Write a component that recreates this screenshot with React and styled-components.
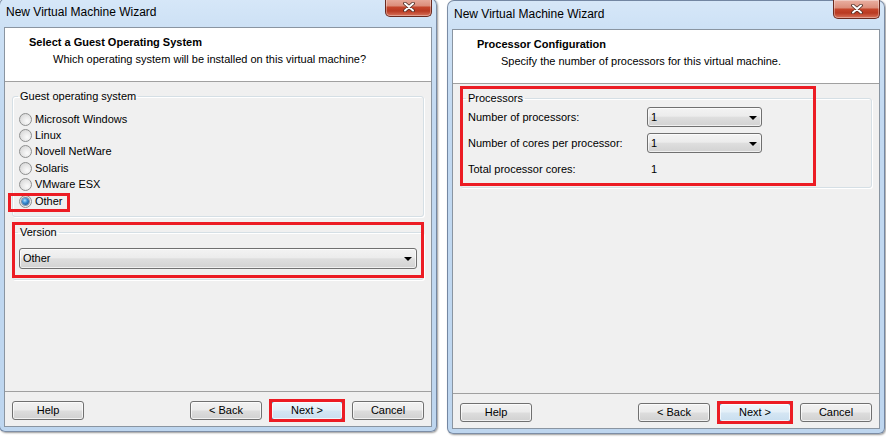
import React from 'react';
import styled, { createGlobalStyle } from 'styled-components';

const Global = createGlobalStyle`
  html, body { margin: 0; padding: 0; background: #fff; }
  body {
    width: 886px; height: 438px; overflow: hidden;
    font-family: "Liberation Sans", Arial, sans-serif; font-size: 11px; color: #000;
  }
  * { box-sizing: border-box; }
`;

const Stage = styled.div`
  display: flex;
  align-items: flex-start;
  gap: 10px;
  width: 886px;
  height: 438px;
  overflow: hidden;
`;

const Frame = styled.div`
  flex: none;
  width: 438px;
  height: 434px;
  margin-left: ${p => p.$dx || 0}px;
  margin-top: ${p => p.$dy || 0}px;
  display: flex;
  flex-direction: column;
  padding: 0 4px 4px 4px;
  border: 1px solid rgba(52, 70, 98, 0.55);
  border-radius: 7px 7px 6px 6px;
  background: linear-gradient(180deg, #d6e7f8 0px, #cde1f5 28px, #c2d9f1 120px, #bed6ef 100%);
  box-shadow: 1px 1px 2px rgba(0, 0, 0, 0.4);
`;

const TitleBar = styled.div`
  height: 28px;
  display: flex;
  align-items: flex-start;
  justify-content: space-between;
  padding-left: 2px;
`;

const TitleText = styled.div`
  margin-top: 6px;
  font-size: 12px;
  line-height: 15px;
  color: #000;
`;

const CloseBtn = styled.div`
  width: 47px;
  height: 19px;
  margin-top: -1px;
  border: 1px solid #6b2a1f;
  border-top: none;
  border-radius: 0 0 5px 5px;
  background: linear-gradient(180deg, #eab0a2 0%, #dc8f7c 42%, #c4452b 52%, #b93a22 72%, #d8735b 100%);
  box-shadow: inset 0 0 0 1px rgba(255, 255, 255, 0.35);
  display: flex;
  align-items: center;
  justify-content: center;
`;

const Client = styled.div`
  flex: 1;
  display: flex;
  flex-direction: column;
  border: 1px solid #8a95a1;
  background: #f0f0f0;
`;

const Header = styled.div`
  background: #fff;
  border-bottom: 1px solid #a0a0a0;
  padding: 7px 0 15px 24px;
  display: flex;
  flex-direction: column;
  gap: 3px;
`;

const HeadTitle = styled.div`
  font-weight: bold;
  line-height: 14px;
`;

const HeadSub = styled.div`
  line-height: 14px;
  padding-left: 24px;
`;

const Body = styled.div`
  flex: 1;
  padding: 8px 7px 0 7px;
  display: flex;
  flex-direction: column;
  gap: ${p => p.$gap || 0}px;
`;

const Annotated = styled.div`
  position: relative;
`;

const RedBox = styled.div`
  position: absolute;
  top: ${p => p.$t}px;
  left: ${p => p.$l}px;
  ${p => (p.$w != null ? `width: ${p.$w}px;` : `right: ${p.$r}px;`)}
  ${p => (p.$h != null ? `height: ${p.$h}px;` : `bottom: ${p.$b}px;`)}
  border: 3px solid #ec1c24;
  pointer-events: none;
  z-index: 2;
`;

const Group = styled.fieldset`
  margin: 0;
  min-width: 0;
  padding: 0 6px ${p => p.$pb}px 6px;
  border: 1px solid #d5dfe5;
  border-radius: 3px;
  box-shadow: inset 1px 1px 0 #fff, 1px 1px 0 #fff;
`;

const Legend = styled.legend`
  margin-left: -1px;
  padding: 0 2px;
  line-height: 13px;
  font-size: 11px;
`;

const RadioList = styled.div`
  padding-top: 8px;
  display: flex;
  flex-direction: column;
`;

const RadioRow = styled.div`
  position: relative;
  height: 16.4px;
  display: flex;
  align-items: center;
  gap: 3px;
  line-height: 13px;
`;

const RadioDot = styled.span`
  flex: none;
  width: 13px;
  height: 13px;
  border-radius: 50%;
  border: 1px solid #8e8f8f;
  background: radial-gradient(circle at 65% 65%, #fbfbfb 0, #e8e8e8 45%, #cfcfcf 100%);
  display: flex;
  align-items: center;
  justify-content: center;
  &::after {
    content: '';
    display: ${p => (p.$on ? 'block' : 'none')};
    width: 7px;
    height: 7px;
    border-radius: 50%;
    background: radial-gradient(circle at 40% 35%, #b4e3ff 0, #3a8fd6 40%, #0b3d72 100%);
    box-shadow: 0 0 0 1px rgba(20, 60, 110, 0.5);
  }
`;

const ComboWrap = styled.div`
  padding-top: ${p => p.$pt || 0}px;
`;

const Combo = styled.div`
  height: ${p => p.$h || 20}px;
  width: ${p => (p.$w ? `${p.$w}px` : 'auto')};
  border: 1px solid #707070;
  border-radius: 3px;
  background: linear-gradient(180deg, #f3f3f3 0%, #ececec 45%, #dedede 52%, #d2d2d2 100%);
  box-shadow: inset 0 0 0 1px rgba(255, 255, 255, 0.65);
  display: flex;
  align-items: center;
  justify-content: space-between;
  padding: 0 4px 0 3px;
  line-height: 13px;
`;

const Arrow = styled.span`
  width: 0;
  height: 0;
  border-left: 4px solid transparent;
  border-right: 4px solid transparent;
  border-top: 4px solid #000;
  margin-top: 1px;
`;

const ProcGrid = styled.div`
  display: grid;
  grid-template-columns: 179px 115px;
  grid-auto-rows: 26px;
  align-items: center;
  margin-top: -1px;
  padding-left: 1px;
  line-height: 13px;
`;

const Value = styled.div`
  padding-left: 4px;
`;

const Footer = styled.div`
  border-top: 1px solid #a0a0a0;
  padding: 9px 7px 6px 7px;
  display: flex;
  align-items: center;
`;

const Spacer = styled.div`
  flex: 1;
`;

const BtnGroup = styled.div`
  display: flex;
  gap: 9px;
`;

const Btn = styled.button`
  position: relative;
  width: 72px;
  height: 19px;
  padding: 0;
  border: 1px solid ${p => (p.$def ? '#3c7fb1' : '#707070')};
  border-radius: 3px;
  font-family: "Liberation Sans", Arial, sans-serif;
  font-size: 11px;
  line-height: 13px;
  color: #000;
  background: ${p =>
    p.$def
      ? 'linear-gradient(180deg, #eef6fc 0%, #e3eff8 48%, #d5e6f3 52%, #c9deef 100%)'
      : 'linear-gradient(180deg, #f2f2f2 0%, #ebebeb 48%, #dddddd 52%, #d1d1d1 100%)'};
  box-shadow: inset 0 0 0 1px rgba(255, 255, 255, 0.7);
`;

const CloseIcon = () => (
  <svg width="12" height="10" viewBox="0 0 12 10">
    <path d="M2 1.5 L10 8.5 M10 1.5 L2 8.5" stroke="#4a2a22" strokeWidth="3.6" strokeLinecap="round" />
    <path d="M2 1.5 L10 8.5 M10 1.5 L2 8.5" stroke="#fff" strokeWidth="2" strokeLinecap="round" />
  </svg>
);

const Window = ({ dx, dy, title, subtitle, children, gap }) => (
  <Frame $dx={dx} $dy={dy}>
    <TitleBar>
      <TitleText>New Virtual Machine Wizard</TitleText>
      <CloseBtn><CloseIcon /></CloseBtn>
    </TitleBar>
    <Client>
      <Header>
        <HeadTitle>{title}</HeadTitle>
        <HeadSub>{subtitle}</HeadSub>
      </Header>
      <Body $gap={gap}>{children}</Body>
      <Footer>
        <Btn>Help</Btn>
        <Spacer />
        <BtnGroup>
          <Btn>&lt; Back</Btn>
          <Btn $def>
            Next &gt;
            <RedBox $t={-3} $l={-3} $r={-3} $b={-3} />
          </Btn>
          <Btn>Cancel</Btn>
        </BtnGroup>
      </Footer>
    </Client>
  </Frame>
);

const osList = ['Microsoft Windows', 'Linux', 'Novell NetWare', 'Solaris', 'VMware ESX', 'Other'];

export default function App() {
  return (
    <>
      <Global />
      <Stage>
        <Window
          dx={-1}
          dy={-2}
          gap={9}
          title="Select a Guest Operating System"
          subtitle="Which operating system will be installed on this virtual machine?"
        >
          <Group $pb={7}>
            <Legend>Guest operating system</Legend>
            <RadioList>
              {osList.map(os => (
                <RadioRow key={os}>
                  <RadioDot $on={os === 'Other'} />
                  {os}
                  {os === 'Other' && <RedBox $t={0} $l={-11} $w={62} $h={19} />}
                </RadioRow>
              ))}
            </RadioList>
          </Group>
          <Annotated>
            <Group $pb={10}>
              <Legend>Version</Legend>
              <ComboWrap $pt={9}>
                <Combo $h={21}>
                  <span>Other</span>
                  <Arrow />
                </Combo>
              </ComboWrap>
            </Group>
            <RedBox $t={-4} $l={0} $r={0} $b={2} />
          </Annotated>
        </Window>
        <Window
          title="Processor Configuration"
          subtitle="Specify the number of processors for this virtual machine."
        >
          <Annotated>
            <Group $pb={5}>
              <Legend>Processors</Legend>
              <ProcGrid>
                <span>Number of processors:</span>
                <Combo $w={115}><span>1</span><Arrow /></Combo>
                <span>Number of cores per processor:</span>
                <Combo $w={115}><span>1</span><Arrow /></Combo>
                <span>Total processor cores:</span>
                <Value>1</Value>
              </ProcGrid>
            </Group>
            <RedBox $t={-6} $l={0} $w={356} $b={2} />
          </Annotated>
        </Window>
      </Stage>
    </>
  );
}
